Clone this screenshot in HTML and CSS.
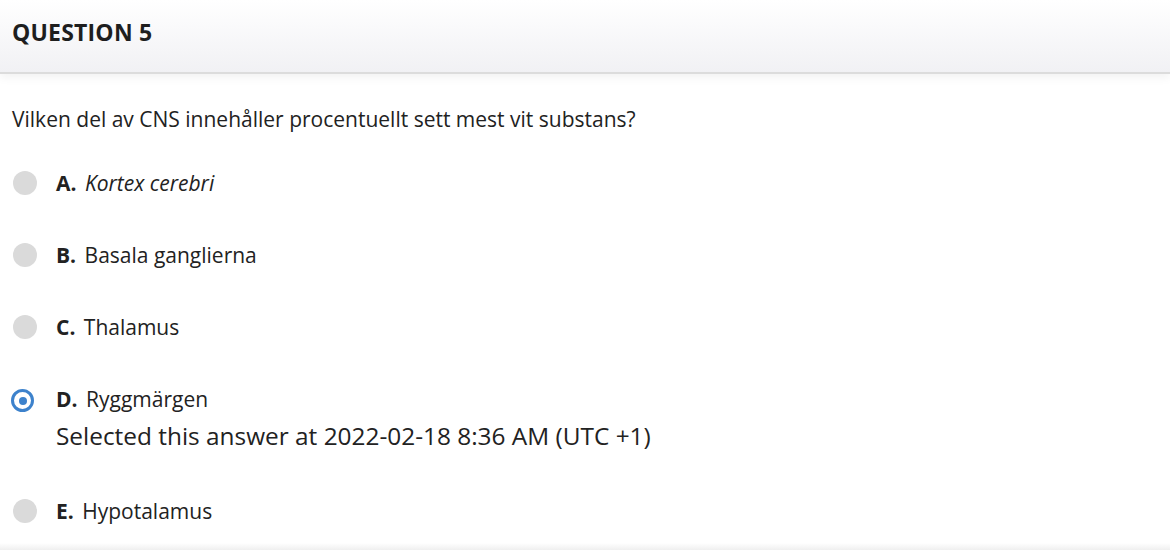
FILE: index.html
```html
<!DOCTYPE html>
<html lang="sv">
<head>
<meta charset="utf-8">
<title>Question 5</title>
<link rel="stylesheet" href="styles.css">
</head>
<body>
<div class="card">
  <div class="card-header"><h2 class="title">QUESTION 5</h2></div>
  <div class="card-body">
    <p class="question">Vilken del av CNS innehåller procentuellt sett mest vit substans?</p>
    <ul class="options">
      <li class="option">
        <span class="radio"></span>
        <div class="label"><span class="letter">A.</span> <em>Kortex cerebri</em></div>
      </li>
      <li class="option">
        <span class="radio"></span>
        <div class="label"><span class="letter">B.</span> Basala ganglierna</div>
      </li>
      <li class="option">
        <span class="radio"></span>
        <div class="label"><span class="letter">C.</span> Thalamus</div>
      </li>
      <li class="option selected">
        <span class="radio radio-on"></span>
        <div class="label"><span class="letter">D.</span> Ryggmärgen
          <div class="selected-note">Selected this answer at 2022-02-18 8:36 AM (UTC +1)</div>
        </div>
      </li>
      <li class="option">
        <span class="radio"></span>
        <div class="label"><span class="letter">E.</span> Hypotalamus</div>
      </li>
    </ul>
  </div>
</div>
<div class="next-card"></div>
</body>
</html>
```
FILE: styles.css
```css
html, body {
  margin: 0;
  padding: 0;
  background: #fff;
}
body {
  font-family: "Open Sans", "Liberation Sans", sans-serif;
  color: #222;
  width: 1170px;
  height: 550px;
  overflow: hidden;
}
.card-header {
  box-sizing: border-box;
  height: 74px;
  background: linear-gradient(#ffffff, #f1f1f4);
  border-bottom: 2px solid #dcdcdc;
  box-shadow: 0 3px 10px rgba(0,0,0,0.06);
  display: flex;
  align-items: flex-start;
  padding: 16px 0 0 12px;
}
.title {
  margin: 0;
  font-size: 23px;
  line-height: 32px;
  font-weight: 700;
  color: #1e1e1e;
  letter-spacing: 0.2px;
}
.card-body {
  padding: 0 0 0 12px;
}
.question {
  margin: 33px 0 0 0;
  font-size: 21px;
  line-height: 24px;
}
.options {
  list-style: none;
  margin: 40px 0 0 0;
  padding: 0;
}
.option {
  display: flex;
  align-items: flex-start;
  min-height: 24px;
  margin-bottom: 48px;
  font-size: 21px;
  line-height: 24px;
}
.radio {
  width: 24px;
  height: 24px;
  border-radius: 50%;
  background: #dadada;
  margin-left: 1px;
  flex: none;
}
.radio-on {
  width: 23px;
  height: 23px;
  box-sizing: border-box;
  background: #fff;
  border: 3.5px solid #3d82cc;
  margin: 2px 3px 0 -1px;
  display: flex;
  align-items: center;
  justify-content: center;
}
.radio-on::after {
  content: "";
  width: 8px;
  height: 8px;
  border-radius: 50%;
  background: #3d82cc;
}
.label {
  margin-left: 19px;
}
.letter {
  font-weight: 700;
  margin-right: 3px;
}
.selected-note {
  margin-top: 7px;
  font-size: 24.4px;
  line-height: 36px;
}
.option.selected {
  margin-bottom: 45px;
}
.next-card {
  position: absolute;
  left: 0;
  top: 543px;
  width: 1170px;
  height: 8px;
  background: linear-gradient(#ffffff, #ededed);
}
```
